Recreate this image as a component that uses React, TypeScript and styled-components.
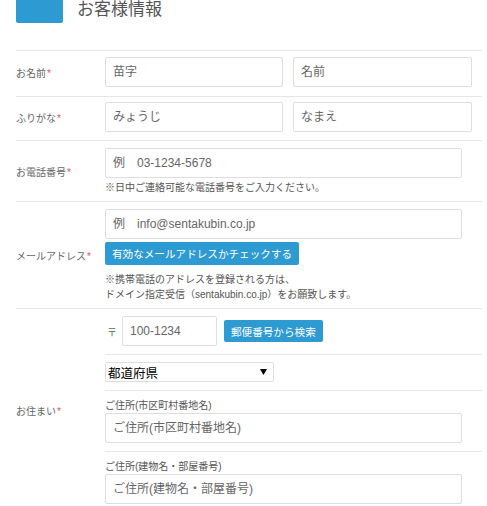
import React from "react";
import styled, { createGlobalStyle } from "styled-components";

const Global = createGlobalStyle`
  html, body { margin: 0; padding: 0; background: #fff; }
  body {
    font-family: "Liberation Sans", Arial, "Noto Sans CJK JP", sans-serif;
    color: #555;
  }
  * { box-sizing: border-box; }
`;

const Page = styled.div`
  padding: 0 5px 0 16px;
`;

const Header = styled.div`
  display: flex;
  align-items: flex-start;
  gap: 14px;
  height: 50px;
`;

const HeaderBlock = styled.div`
  width: 47px;
  height: 23px;
  background: #2e9ad2;
  border-radius: 0 0 2px 2px;
`;

const Title = styled.h2`
  margin: 0;
  font-size: 17px;
  font-weight: normal;
  line-height: 20px;
  color: #555;
`;

const Row = styled.div<{ $pt?: number; $pb?: number }>`
  display: grid;
  grid-template-columns: 89px 1fr;
  align-items: center;
  border-top: 1px solid #e6e6e6;
  padding: ${(p) => p.$pt ?? 7}px 0 ${(p) => p.$pb ?? 6}px;
`;

const Label = styled.div`
  font-size: 10px;
  color: #666;
  white-space: nowrap;
`;

const Req = styled.span`
  color: #ea4e57;
  font-size: 10px;
  margin-left: 1px;
`;

const Field = styled.div`
  display: flex;
  flex-direction: column;
  align-items: flex-start;
`;

const Pair = styled.div`
  display: grid;
  grid-template-columns: 178px 179px;
  gap: 10px;
`;

const Input = styled.input<{ $w?: number }>`
  width: ${(p) => (p.$w ? `${p.$w}px` : "100%")};
  height: 30px;
  border: 1px solid #dedede;
  border-radius: 2px;
  padding: 0 7px;
  font-family: inherit;
  font-size: 12px;
  color: #555;
  background: #fff;
  outline: none;
  &::placeholder { color: #666; opacity: 1; }
`;

const Note = styled.div<{ $mt?: number }>`
  font-size: 10px;
  line-height: 15px;
  color: #555;
  margin-top: ${(p) => p.$mt ?? 2}px;
`;

const Button = styled.button<{ $h?: number; $mt?: number }>`
  height: ${(p) => p.$h ?? 23}px;
  padding: 0 7px;
  border: none;
  border-radius: 2px;
  background: #2e9ad2;
  color: #fff;
  font-family: inherit;
  font-size: 10.6px;
  white-space: nowrap;
  margin-top: ${(p) => p.$mt ?? 3}px;
  cursor: pointer;
`;

const SubList = styled.div`
  display: flex;
  flex-direction: column;
`;

const SubRow = styled.div<{ $first?: boolean }>`
  display: flex;
  flex-direction: column;
  align-items: flex-start;
  padding: 7px 0 8px;
  border-top: ${(p) => (p.$first ? "none" : "1px solid #e6e6e6")};
`;

const PostalLine = styled.div`
  display: flex;
  align-items: center;
  gap: 7px;
  padding-left: 2px;
`;

const PostMark = styled.span`
  font-size: 10px;
  color: #666;
  width: 8px;
`;

const SelectWrap = styled.div`
  position: relative;
  width: 169px;
  height: 20px;
`;

const Select = styled.select`
  appearance: none;
  width: 100%;
  height: 20px;
  border: 1px solid #dedede;
  border-radius: 2px;
  background: #fff;
  padding: 0 0 0 2px;
  font-family: "Noto Sans CJK JP", sans-serif;
  font-size: 12.5px;
  color: #000;
  outline: none;
`;

const Arrow = styled.svg`
  position: absolute;
  right: 7px;
  top: 7px;
  pointer-events: none;
`;

const SubLabel = styled.div`
  font-size: 10px;
  line-height: 15px;
  color: #555;
`;

export default function App() {
  return (
    <>
      <Global />
      <Page>
        <Header>
          <HeaderBlock />
          <Title>お客様情報</Title>
        </Header>

        <Row $pt={6} $pb={9}>
          <Label>お名前<Req>*</Req></Label>
          <Pair>
            <Input placeholder="苗字" />
            <Input placeholder="名前" />
          </Pair>
        </Row>

        <Row $pt={5} $pb={8}>
          <Label>ふりがな<Req>*</Req></Label>
          <Pair>
            <Input placeholder="みょうじ" />
            <Input placeholder="なまえ" />
          </Pair>
        </Row>

        <Row>
          <Label>お電話番号<Req>*</Req></Label>
          <Field>
            <Input $w={357} placeholder="例　03-1234-5678" />
            <Note>※日中ご連絡可能な電話番号をご入力ください。</Note>
          </Field>
        </Row>

        <Row>
          <Label>メールアドレス<Req>*</Req></Label>
          <Field>
            <Input $w={357} placeholder="例　info@sentakubin.co.jp" />
            <Button>有効なメールアドレスかチェックする</Button>
            <Note $mt={7}>
              ※携帯電話のアドレスを登録される方は、
              <br />
              ドメイン指定受信（sentakubin.co.jp）をお願致します。
            </Note>
          </Field>
        </Row>

        <Row $pt={0} $pb={0}>
          <Label>お住まい<Req>*</Req></Label>
          <SubList>
            <SubRow $first>
              <PostalLine>
                <PostMark>〒</PostMark>
                <Input $w={95} placeholder="100-1234" />
                <Button $h={22} $mt={0}>郵便番号から検索</Button>
              </PostalLine>
            </SubRow>
            <SubRow>
              <SelectWrap>
                <Select defaultValue="">
                  <option value="">都道府県</option>
                </Select>
                <Arrow width="7" height="6" viewBox="0 0 7 6">
                  <path d="M0 0 H7 L3.5 6 Z" fill="#000" />
                </Arrow>
              </SelectWrap>
            </SubRow>
            <SubRow>
              <SubLabel>ご住所(市区町村番地名)</SubLabel>
              <Input $w={357} placeholder="ご住所(市区町村番地名)" />
            </SubRow>
            <SubRow>
              <SubLabel>ご住所(建物名・部屋番号)</SubLabel>
              <Input $w={357} placeholder="ご住所(建物名・部屋番号)" />
            </SubRow>
          </SubList>
        </Row>
      </Page>
    </>
  );
}
